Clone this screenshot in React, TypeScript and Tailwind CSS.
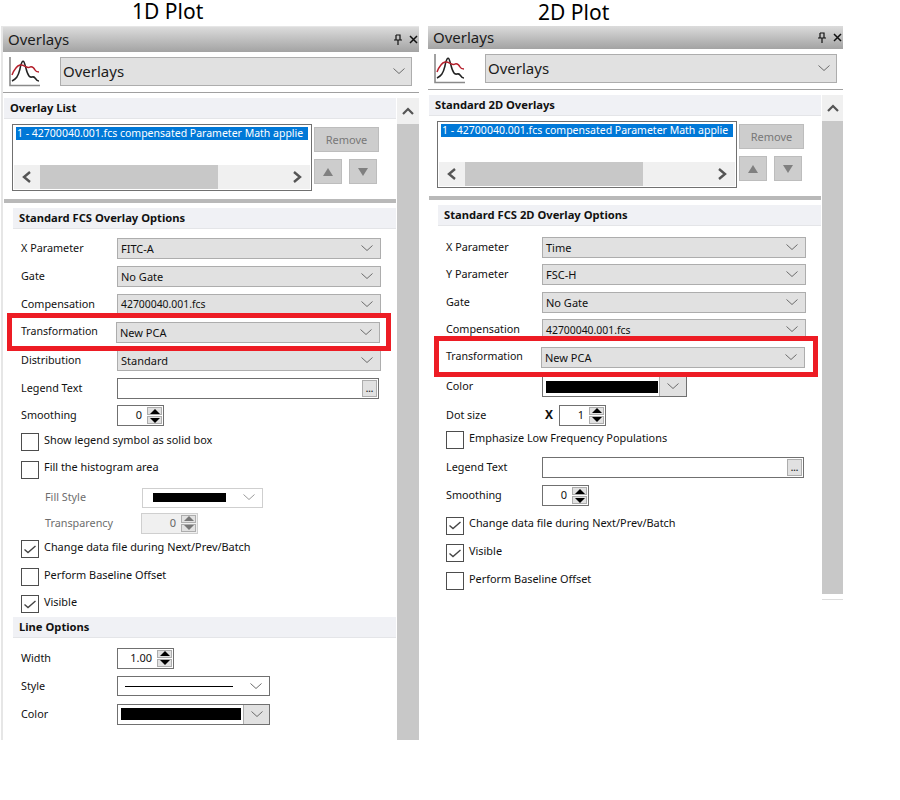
import type { ReactNode } from 'react';

const ui = "font-['Noto_Sans',sans-serif]";

function Chevron({ className = 'text-[#6b6b6b]' }: { className?: string }) {
  return (
    <svg width="12" height="7" viewBox="0 0 12 7" className={className}>
      <path d="M0.5 0.5 L6 5.5 L11.5 0.5" fill="none" stroke="currentColor" strokeWidth="1" />
    </svg>
  );
}

function PlotIcon() {
  return (
    <svg width="32" height="30" viewBox="0 0 32 30">
      <path d="M1 0 V28.5 H31" fill="none" stroke="#8a8a8a" strokeWidth="1.6" />
      <path d="M3 24 C7 22 9 20 11 12 C12 5 14 3 15 5 C17 9 17 15 20 19 C22 22 24 18 26 21 C28 24 29 24 30 24" fill="none" stroke="#222" strokeWidth="1.5" />
      <path d="M3 18 C5 13 7 9 11 8 C15 7 18 12 21 10 C24 9 25 11 26 13 C27 15 29 15 30 15" fill="none" stroke="#b5202c" strokeWidth="1.5" />
    </svg>
  );
}

function Section({ children, inset = false }: { children: ReactNode; inset?: boolean }) {
  return (
    <div className={`h-[21px] bg-[#f0f1f5] border-b border-[#e4e5e8] flex items-center pt-px font-bold text-[11.2px] text-[#111] ${inset ? 'ml-[9px] pl-[6px]' : 'pl-[6px]'}`}>
      {children}
    </div>
  );
}

function Select({ value, small = false }: { value: string; small?: boolean }) {
  return (
    <div className={`w-[264px] h-[21px] bg-[#e1e1e1] border border-[#adadad] flex items-center justify-between pl-[3px] pr-[7px] text-[#111] ${small ? 'text-[10.4px]' : 'text-[11px]'}`}>
      <span className="pt-[2px]">{value}</span>
      <Chevron />
    </div>
  );
}

function Spinner({ value, wide = false, off = false }: { value: string; wide?: boolean; off?: boolean }) {
  const arrow = off ? 'border-[#777]' : 'border-black';
  return (
    <div className={`h-[21px] border flex items-center justify-end pr-px text-[11px] ${wide ? 'w-[57px]' : 'w-[47px]'} ${off ? 'bg-[#f0f0f0] border-[#cfcfcf] text-[#666]' : 'bg-white border-[#707070] text-[#111]'}`}>
      <span className="mr-[5px]">{value}</span>
      <div className="w-[15px] h-[17px] flex flex-col justify-between">
        <div className="h-[8px] bg-[#e1e1e1] border border-[#adadad] flex items-center justify-center">
          <div className={`w-0 h-0 border-x-[5px] border-x-transparent border-b-[5px] ${arrow}`} />
        </div>
        <div className="h-[8px] bg-[#e1e1e1] border border-[#adadad] flex items-center justify-center">
          <div className={`w-0 h-0 border-x-[5px] border-x-transparent border-t-[5px] ${arrow}`} />
        </div>
      </div>
    </div>
  );
}

function Row({ label, h, children, gray = false }: { label: string; h: string; children: ReactNode; gray?: boolean }) {
  return (
    <div className={`${h} flex items-center`}>
      <div className={`shrink-0 text-[10.8px] ${gray ? 'pl-[24px] w-[120px] text-[#6d6d6d]' : 'w-[96px] text-[#111]'}`}>{label}</div>
      {children}
    </div>
  );
}

function Check({ label, h, checked = false }: { label: string; h: string; checked?: boolean }) {
  return (
    <div className={`${h} flex items-center`}>
      <div className="w-[18px] h-[18px] border border-[#4d4d4d] bg-white flex items-center justify-center shrink-0">
        {checked && (
          <svg width="12" height="9" viewBox="0 0 12 9">
            <path d="M0.5 4.5 L4 7.5 L11.5 1" fill="none" stroke="#444" strokeWidth="1.4" />
          </svg>
        )}
      </div>
      <span className="ml-[5px] -mt-[4px] text-[10.9px] text-[#111]">{label}</span>
    </div>
  );
}

function Transformation({ h, box }: { h: string; box: string }) {
  return (
    <div className={`${h} relative flex items-center`}>
      <div className="w-[96px] shrink-0 text-[10.6px] text-[#111]">Transformation</div>
      <div className="-ml-px">
        <Select value="New PCA" />
      </div>
      <div className={`absolute w-[384px] border-[5px] border-[#ed1c24] ${box}`} />
    </div>
  );
}

function LegendText({ h }: { h: string }) {
  return (
    <Row label="Legend Text" h={h}>
      <div className="w-[262px] h-[21px] bg-white border border-[#707070] flex items-center justify-end pr-px">
        <div className="w-[15px] h-[17px] bg-[#e1e1e1] border border-[#adadad] flex items-center justify-center text-[9px] font-bold leading-none text-[#333]">...</div>
      </div>
    </Row>
  );
}

function ColorPick({ w, swatch, button }: { w: string; swatch: string; button: string }) {
  return (
    <div className={`${w} h-[21px] bg-white border border-[#707070] flex items-center justify-between`}>
      <div className={`${swatch} h-[12px] ml-[3px] bg-black`} />
      <div className={`${button} h-full bg-[#e1e1e1] flex items-center justify-center border-l border-[#adadad]`}>
        <Chevron />
      </div>
    </div>
  );
}

function SmallButton({ up }: { up: boolean }) {
  return (
    <div className="w-[28px] h-[25px] bg-[#cdcdcd] border border-[#bdbdbd] flex items-center justify-center">
      <div className={`w-0 h-0 border-x-[5px] border-x-transparent ${up ? 'border-b-[8px] border-b-[#808080]' : 'border-t-[8px] border-t-[#808080]'}`} />
    </div>
  );
}

function Panel(props: { w: string; bar: string; border: string; scroll: string; body: string; list: string; options: string; children: ReactNode }) {
  return (
    <div className={`${props.w} ${props.border} flex flex-col`}>
      <div className={`${props.bar} bg-gradient-to-b from-[#dcdcdc] to-[#a3a3a3] flex items-center justify-between pl-[5px] pr-px`}>
        <span className="text-[15px] text-[#1c1c1c]">Overlays</span>
        <div className="flex items-center gap-[6px]">
          <svg width="10" height="11" viewBox="0 0 10 11">
            <path d="M3 1 H7 V6 H9 M1 6 H9 M5 6 V11 M3 1 V6" fill="none" stroke="#111" strokeWidth="1.2" />
          </svg>
          <svg width="9" height="9" viewBox="0 0 9 9">
            <path d="M1 1 L8 8 M8 1 L1 8" stroke="#111" strokeWidth="1.5" />
          </svg>
        </div>
      </div>
      <div className="h-[41px] border-b border-[#a0a0a0] flex items-start pl-[6px] pt-[5px]">
        <PlotIcon />
        <div className="ml-[19px] w-[352px] h-[29px] bg-[#e1e1e1] border border-[#adadad] flex items-center justify-between pl-[2px] pr-[6px] text-[15px] text-[#1c1c1c]">
          <span>Overlays</span>
          <Chevron />
        </div>
      </div>
      <div className={`${props.body} mt-[5px] flex`}>
        <div className="ml-px w-[392px]">
          <Section>{props.list}</Section>
          <div className="flex items-start pl-[8px] mt-[5px]">
            <div className="w-[300px] h-[67px] bg-white border border-[#707070] flex flex-col justify-between p-px">
              <div className="h-[13px] mt-px mx-[2px] pl-px bg-[#0078d7] text-white text-[10.5px] leading-[13px] whitespace-nowrap">
                1 - 42700040.001.fcs compensated Parameter Math applie
              </div>
              <div className="h-[24px] bg-[#f0f0f0] flex items-center">
                <svg width="26" height="24" viewBox="0 0 26 24" className="shrink-0">
                  <path d="M16 7 L10 12 L16 17" fill="none" stroke="#555" strokeWidth="2.4" />
                </svg>
                <div className="w-[178px] h-full bg-[#c8c8c8]" />
                <svg width="26" height="24" viewBox="0 0 26 24" className="shrink-0 ml-auto">
                  <path d="M10 7 L16 12 L10 17" fill="none" stroke="#555" strokeWidth="2.4" />
                </svg>
              </div>
            </div>
            <div className="ml-[2px] mt-[3px]">
              <div className="w-[65px] h-[25px] pt-px bg-[#cdcdcd] border border-[#bdbdbd] flex items-center justify-center text-[11px] text-[#787878]">Remove</div>
              <div className="flex gap-[7px] mt-[7px]">
                <SmallButton up />
                <SmallButton up={false} />
              </div>
            </div>
          </div>
          <div className="h-[4px] bg-[#b9b9b9] mt-[8px]" />
          <div className="mt-[5px]">
            <Section inset>{props.options}</Section>
          </div>
          <div className="pl-[17px]">{props.children}</div>
        </div>
        <div className={`${props.scroll} ml-px bg-[#c8c8c8]`}>
          <div className="h-[26px] bg-[#f0f0f0] flex items-center justify-center">
            <svg width="12" height="8" viewBox="0 0 12 8">
              <path d="M1 7 L6 2 L11 7" fill="none" stroke="#555" strokeWidth="2.2" />
            </svg>
          </div>
        </div>
      </div>
    </div>
  );
}

export default function App() {
  return (
    <div className={`w-[900px] h-[800px] bg-white flex ${ui}`}>
      <div className="ml-px">
        <div className="h-[26px] pl-[131px] text-[21px] leading-[22px] text-black">1D Plot</div>
        <Panel
          w="w-[418px]"
          bar="h-[25px]"
          border="border-l-2 border-t border-[#e6e6e6]"
          scroll="w-[22px]"
          body="h-[642px]"
          list="Overlay List"
          options="Standard FCS Overlay Options"
        >
          <div className="mt-[5px]">
            <Row label="X Parameter" h="h-[28px]"><Select value="FITC-A" /></Row>
            <Row label="Gate" h="h-[28px]"><Select value="No Gate" /></Row>
            <Row label="Compensation" h="h-[28px]"><Select value="42700040.001.fcs" small /></Row>
            <Transformation h="h-[28px]" box="-left-[14px] -top-[5px] h-[38px]" />
            <Row label="Distribution" h="h-[28px]"><Select value="Standard" /></Row>
            <LegendText h="h-[28px]" />
            <Row label="Smoothing" h="h-[27px]"><Spinner value="0" /></Row>
            <Check label="Show legend symbol as solid box" h="h-[26px]" />
            <Check label="Fill the histogram area" h="h-[29px]" />
            <Row label="Fill Style" h="h-[27px]" gray>
              <div className="ml-px w-[121px] h-[20px] bg-white border border-[#cfcfcf] flex items-center justify-between pl-[10px] pr-[7px]">
                <div className="w-[73px] h-[9px] bg-black" />
                <Chevron className="text-[#9a9a9a]" />
              </div>
            </Row>
            <Row label="Transparency" h="h-[24px]" gray><Spinner value="0" wide off /></Row>
            <Check label="Change data file during Next/Prev/Batch" h="h-[28px]" checked />
            <Check label="Perform Baseline Offset" h="h-[28px]" />
            <Check label="Visible" h="h-[26px]" checked />
          </div>
          <div className="-ml-[8px]">
            <Section>Line Options</Section>
          </div>
          <div className="mt-[6px]">
            <Row label="Width" h="h-[28px]"><Spinner value="1.00" wide /></Row>
            <Row label="Style" h="h-[28px]">
              <div className="w-[153px] h-[20px] bg-white border border-[#707070] flex items-center justify-between pl-[7px] pr-[7px]">
                <div className="w-[108px] h-px bg-black" />
                <Chevron />
              </div>
            </Row>
            <Row label="Color" h="h-[28px]">
              <ColorPick w="w-[153px]" swatch="w-[120px]" button="w-[26px]" />
            </Row>
          </div>
        </Panel>
      </div>
      <div className="ml-[9px]">
        <div className="h-[26px] pl-[110px] pt-px text-[21px] leading-[22px] text-black">2D Plot</div>
        <Panel
          w="w-[415px]"
          bar="h-[23px]"
          border=""
          scroll="w-[21px]"
          body="h-[499px]"
          list="Standard 2D Overlays"
          options="Standard FCS 2D Overlay Options"
        >
          <div className="mt-[8px]">
            <Row label="X Parameter" h="h-[27px]"><Select value="Time" /></Row>
            <Row label="Y Parameter" h="h-[27px]"><Select value="FSC-H" /></Row>
            <Row label="Gate" h="h-[28px]"><Select value="No Gate" /></Row>
            <Row label="Compensation" h="h-[27px]"><Select value="42700040.001.fcs" small /></Row>
            <Transformation h="h-[28px]" box="-left-[12px] -top-[7px] h-[41px]" />
            <Row label="Color" h="h-[31px]">
              <ColorPick w="w-[145px]" swatch="w-[112px]" button="w-[27px]" />
            </Row>
            <Row label="Dot size" h="h-[26px]">
              <span className="w-[17px] text-[12px] font-bold text-[#111] pl-[3px]">X</span>
              <Spinner value="1" />
            </Row>
            <Check label="Emphasize Low Frequency Populations" h="h-[24px]" />
            <LegendText h="h-[30px]" />
            <Row label="Smoothing" h="h-[27px]"><Spinner value="0" /></Row>
            <Check label="Change data file during Next/Prev/Batch" h="h-[33px]" checked />
            <Check label="Visible" h="h-[22px]" checked />
            <Check label="Perform Baseline Offset" h="h-[34px]" />
          </div>
        </Panel>
        <div className="mt-[5px] ml-[394px] h-px bg-[#dddddd]" />
      </div>
    </div>
  );
}
